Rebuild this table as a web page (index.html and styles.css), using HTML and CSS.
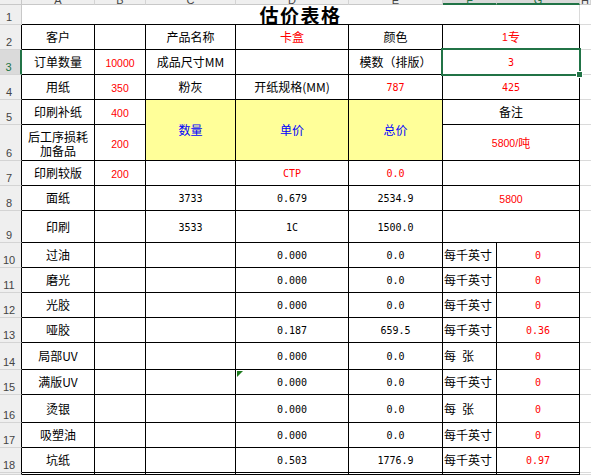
FILE: index.html
```html
<!DOCTYPE html>
<html lang="zh-CN">
<head>
<meta charset="utf-8">
<title>估价表格</title>
<link rel="stylesheet" href="styles.css">
</head>
<body>
<div class="sheet">
  <div class="ch corner"></div>
  <div class="ch"><span>A</span></div>
  <div class="ch"><span>B</span></div>
  <div class="ch"><span>C</span></div>
  <div class="ch"><span>D</span></div>
  <div class="ch"><span>E</span></div>
  <div class="ch sel"><span>F</span></div>
  <div class="ch sel"><span>G</span></div>
  <div class="ch"><span>H</span></div>

  <div class="rh rh-plain">1</div>
  <div class="c title span7">估价表格</div>
  <div class="g"></div>

  <div class="rh">2</div>
  <div class="c">客户</div>
  <div class="c"></div>
  <div class="c">产品名称</div>
  <div class="c red">卡盒</div>
  <div class="c">颜色</div>
  <div class="c span2 red"><span class="ar">1</span>专</div>
  <div class="g"></div>

  <div class="rh on">3</div>
  <div class="c">订单数量</div>
  <div class="c red ar">10000</div>
  <div class="c">成品尺寸MM</div>
  <div class="c"></div>
  <div class="c">模数（排版）</div>
  <div class="c span2 red num selcell">3<div class="selbox"></div><div class="handle"></div></div>
  <div class="g"></div>

  <div class="rh">4</div>
  <div class="c">用纸</div>
  <div class="c red ar">350</div>
  <div class="c">粉灰</div>
  <div class="c">开纸规格(MM)</div>
  <div class="c red num">787</div>
  <div class="c span2 red num">425</div>
  <div class="g"></div>

  <div class="rh">5</div>
  <div class="c">印刷补纸</div>
  <div class="c red ar">400</div>
  <div class="c yel blue rspan2">数量</div>
  <div class="c yel blue rspan2">单价</div>
  <div class="c yel blue rspan2">总价</div>
  <div class="c span2">备注</div>
  <div class="g"></div>

  <div class="rh">6</div>
  <div class="c two"><span>后工序损耗</span><span>加备品</span></div>
  <div class="c red ar">200</div>
  <div class="c span2 red"><span class="ar">5800/</span>吨</div>
  <div class="g"></div>

  <div class="rh">7</div>
  <div class="c">印刷较版</div>
  <div class="c red ar">200</div>
  <div class="c"></div>
  <div class="c red num">CTP</div>
  <div class="c red num">0.0</div>
  <div class="c span2"></div>
  <div class="g"></div>

  <div class="rh">8</div>
  <div class="c">面纸</div>
  <div class="c"></div>
  <div class="c num">3733</div>
  <div class="c num">0.679</div>
  <div class="c num">2534.9</div>
  <div class="c span2 red ar">5800</div>
  <div class="g"></div>

  <div class="rh">9</div>
  <div class="c">印刷</div>
  <div class="c"></div>
  <div class="c num">3533</div>
  <div class="c num">1C</div>
  <div class="c num">1500.0</div>
  <div class="c span2"></div>
  <div class="g"></div>

  <div class="rh">10</div>
  <div class="c">过油</div>
  <div class="c"></div>
  <div class="c"></div>
  <div class="c num">0.000</div>
  <div class="c num">0.0</div>
  <div class="c left">每千英寸</div>
  <div class="c red num">0</div>
  <div class="g"></div>

  <div class="rh">11</div>
  <div class="c">磨光</div>
  <div class="c"></div>
  <div class="c"></div>
  <div class="c num">0.000</div>
  <div class="c num">0.0</div>
  <div class="c left">每千英寸</div>
  <div class="c red num">0</div>
  <div class="g"></div>

  <div class="rh">12</div>
  <div class="c">光胶</div>
  <div class="c"></div>
  <div class="c"></div>
  <div class="c num">0.000</div>
  <div class="c num">0.0</div>
  <div class="c left">每千英寸</div>
  <div class="c red num">0</div>
  <div class="g"></div>

  <div class="rh">13</div>
  <div class="c">哑胶</div>
  <div class="c"></div>
  <div class="c"></div>
  <div class="c num">0.187</div>
  <div class="c num">659.5</div>
  <div class="c left">每千英寸</div>
  <div class="c red num">0.36</div>
  <div class="g"></div>

  <div class="rh">14</div>
  <div class="c">局部UV</div>
  <div class="c"></div>
  <div class="c"></div>
  <div class="c num">0.000</div>
  <div class="c num">0.0</div>
  <div class="c left">每&ensp;张</div>
  <div class="c red num">0</div>
  <div class="g"></div>

  <div class="rh">15</div>
  <div class="c">满版UV</div>
  <div class="c"></div>
  <div class="c"></div>
  <div class="c num flagged">0.000<div class="tri"></div></div>
  <div class="c num">0.0</div>
  <div class="c left">每千英寸</div>
  <div class="c red num">0</div>
  <div class="g"></div>

  <div class="rh">16</div>
  <div class="c">烫银</div>
  <div class="c"></div>
  <div class="c"></div>
  <div class="c num">0.000</div>
  <div class="c num">0.0</div>
  <div class="c left">每&ensp;张</div>
  <div class="c red num">0</div>
  <div class="g"></div>

  <div class="rh">17</div>
  <div class="c">吸塑油</div>
  <div class="c"></div>
  <div class="c"></div>
  <div class="c num">0.000</div>
  <div class="c num">0.0</div>
  <div class="c left">每千英寸</div>
  <div class="c red num">0</div>
  <div class="g"></div>

  <div class="rh">18</div>
  <div class="c">坑纸</div>
  <div class="c"></div>
  <div class="c"></div>
  <div class="c num">0.503</div>
  <div class="c num">1776.9</div>
  <div class="c left">每千英寸</div>
  <div class="c red num">0.97</div>
  <div class="g"></div>

  <div class="rh"></div>
  <div class="c"></div>
  <div class="c"></div>
  <div class="c"></div>
  <div class="c"></div>
  <div class="c"></div>
  <div class="c"></div>
  <div class="c"></div>
  <div class="g"></div>
</div>
</body>
</html>
```

FILE: styles.css
```css
html, body {
  margin: 0;
  padding: 0;
  background: #ffffff;
  overflow: hidden;
}

.sheet {
  width: 591px;
  height: 475px;
  display: grid;
  grid-template-columns: 22px 73px 51px 90px 113px 94px 54px 83px 1fr;
  grid-template-rows: 5px 20px 25px 25px 25px 25px 36px 25px 25px 32px 25px 25px 25px 25px 27px 25px 28px 25px 25px 1fr;
  overflow: hidden;
  font-family: "Noto Sans CJK SC", sans-serif;
  font-size: 12px;
  color: #000;
}

.sheet > div {
  box-sizing: border-box;
  min-width: 0;
  min-height: 0;
}

/* column headers */
.ch {
  background: #efefef;
  border-right: 1px solid #d4d4d4;
  border-bottom: 1px solid #c8c8c8;
  overflow: hidden;
  text-align: center;
  font-family: "Liberation Sans", sans-serif;
  font-size: 11px;
  color: #444;
}
.ch span {
  display: block;
  margin-top: -6px;
  line-height: 12px;
}
.ch.sel {
  background: #d9d9d9;
  color: #217346;
  border-bottom: 2px solid #217346;
}
.ch.corner {
  border-right: 1px solid #c8c8c8;
}

/* row headers */
.rh {
  background: #efefef;
  border-bottom: 1px solid #d4d4d4;
  border-right: 1px solid #000;
  display: flex;
  align-items: flex-end;
  justify-content: center;
  padding: 0 3px 1px 0;
  font-family: "Liberation Sans", sans-serif;
  font-size: 11px;
  line-height: 12px;
  color: #444;
  overflow: hidden;
}
.rh.rh-plain {
  border-right: 1px solid #c8c8c8;
}
.rh.on {
  background: #dadada;
  color: #217346;
  border-right: 2px solid #217346;
}

/* cells */
.c {
  border-right: 1px solid #000;
  border-bottom: 1px solid #000;
  display: flex;
  align-items: center;
  justify-content: center;
  white-space: nowrap;
  line-height: 14px;
}
.g {
  border-bottom: 1px solid #dadada;
}

.span2 { grid-column: span 2; }
.span7 { grid-column: span 7; }
.rspan2 { grid-row: span 2; }

.title {
  border-right: 1px solid #dadada;
  font-size: 19px;
  font-weight: 700;
  letter-spacing: 1.5px;
  line-height: 19px;
  align-items: flex-end;
  overflow: hidden;
}

.two {
  flex-direction: column;
  text-align: center;
  padding-top: 2px;
}
.two span {
  display: block;
  height: 14px;
  line-height: 14px;
}

.left {
  justify-content: flex-start;
  padding-left: 1px;
}

.red { color: #ff0000; }
.blue { color: #0000ff; }
.yel { background: #ffff99; }

.num {
  font-family: "DejaVu Sans Mono", monospace;
  font-size: 10px;
  padding-top: 2px;
}
.ar {
  font-family: "Liberation Sans", sans-serif;
  font-size: 10.5px;
}
.c.ar {
  padding-top: 2px;
}

/* selection */
.selcell {
  position: relative;
}
.selbox {
  position: absolute;
  left: -2px;
  top: -2px;
  right: -2px;
  bottom: -2px;
  border: 2px solid #217346;
  z-index: 2;
}
.handle {
  position: absolute;
  right: -4px;
  bottom: -4px;
  width: 5px;
  height: 5px;
  background: #217346;
  border: 1px solid #fff;
  z-index: 3;
}

/* error indicator */
.flagged {
  position: relative;
}
.tri {
  position: absolute;
  left: 1px;
  top: 1px;
  width: 0;
  height: 0;
  border-top: 6px solid #1e7b1e;
  border-right: 6px solid transparent;
}
```
